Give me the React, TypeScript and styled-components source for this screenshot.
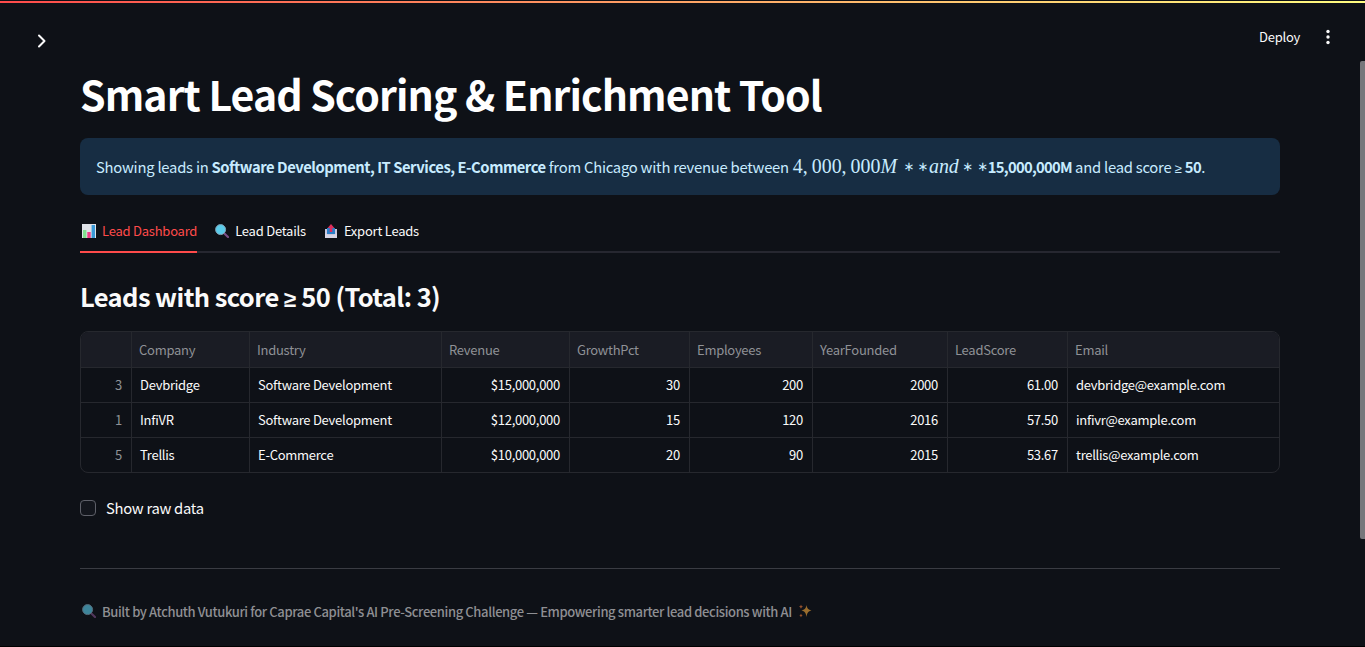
import React from "react";
import styled, { createGlobalStyle } from "styled-components";

const Global = createGlobalStyle`
  html, body { margin: 0; padding: 0; height: 100%; overflow: hidden; background: #0e1117; }
  body { font-family: "Noto Sans CJK SC", "Noto Sans", sans-serif; color: #fafafa; }
  * { box-sizing: border-box; }
`;

const Shell = styled.div`
  position: relative;
  height: 647px;
  overflow: hidden;
  background: #0e1117;
  border-bottom: 1px solid #000;
`;
const Decoration = styled.div`
  height: 2px;
  margin-top: 1px;
  background: linear-gradient(90deg, #ff4b4b, #fffd80);
`;
const Header = styled.header`
  display: flex;
  align-items: flex-start;
  justify-content: space-between;
  height: 57px;
  padding: 24px 29px 0 34px;
`;
const Chevron = styled.svg`
  margin-top: 6px;
`;
const HeaderActions = styled.div`
  display: flex;
  align-items: center;
  gap: 20px;
`;
const Deploy = styled.span`
  font-size: 13px;
  line-height: 20px;
  letter-spacing: -0.25px;
  color: #fafafa;
`;
const Main = styled.main`
  width: 1200px;
  margin-left: 80px;
`;
const Title = styled.h1`
  margin: 11px 0 0;
  height: 44px;
  font-size: 41px;
  line-height: 44px;
  font-weight: 700;
  letter-spacing: -0.9px;
  color: #fff;
  white-space: nowrap;
`;
const Alert = styled.div`
  margin-top: 23px;
  height: 57px;
  padding: 0 16px 1px;
  display: flex;
  align-items: center;
  border-radius: 8px;
  background: #172d43;
  color: #c7ebff;
  font-size: 14.8px;
  letter-spacing: -0.24px;
  white-space: pre;
  b { font-weight: 600; letter-spacing: -0.47px; }
`;
const MathRun = styled.span`
  font-family: "Liberation Serif", serif;
  font-size: 19.9px;
  letter-spacing: 0;
  display: inline-flex;
  align-items: center;
  margin-left: 4px;
  i { font-style: italic; }
`;
const MathWord = styled.i`
  margin-left: 2px;
`;
const Star = styled.span<{ $gap: number }>`
  display: inline-flex;
  justify-content: center;
  width: 8px;
  font-size: 13px;
  font-family: "DejaVu Sans", sans-serif;
  margin-left: ${(p) => p.$gap}px;
`;
const AfterMath = styled.span`
  margin-left: 1px;
`;
const Amount = styled.b`
  && { letter-spacing: -0.72px; }
`;
const Ge = styled.span`
  font-family: "Liberation Sans", sans-serif;
  font-size: 0.88em;
  letter-spacing: 0;
`;
const Tabs = styled.div`
  margin-top: 15px;
  display: flex;
  gap: 16px;
  height: 43px;
  border-bottom: 2px solid #262730;
`;
const Tab = styled.div<{ $active?: boolean }>`
  display: flex;
  align-items: center;
  gap: 6px;
  height: 43px;
  font-size: 13px;
  letter-spacing: -0.23px;
  color: ${(p) => (p.$active ? "#ff4b4b" : "#fafafa")};
  border-bottom: 2px solid ${(p) => (p.$active ? "#ff4b4b" : "transparent")};
  svg { flex: none; margin-left: 2px; }
`;
const Heading = styled.h2`
  margin: 25px 0 0;
  height: 36px;
  font-size: 25.5px;
  line-height: 36px;
  font-weight: 600;
  letter-spacing: -0.6px;
  color: #fafafa;
`;
const Table = styled.div`
  margin-top: 17px;
  width: 1200px;
  height: 142px;
  border: 1px solid #26282e;
  border-radius: 8px;
  overflow: hidden;
`;
const Row = styled.div<{ $head?: boolean }>`
  display: grid;
  grid-template-columns: 51px 118px 192px 128px 120px 123px 135px 120px 1fr;
  height: ${(p) => (p.$head ? "36px" : "35px")};
  background: ${(p) => (p.$head ? "#1a1c24" : "transparent")};
  border-bottom: 1px solid #26282e;
  &:last-child { border-bottom: 0; height: 34px; }
`;
const Cell = styled.div<{ $num?: boolean; $muted?: boolean; $head?: boolean }>`
  display: flex;
  align-items: center;
  justify-content: ${(p) => (p.$num ? "flex-end" : "flex-start")};
  padding: ${(p) => (p.$head ? "0 9px 0 7px" : "0 9px 2px 8px")};
  font-size: 13px;
  letter-spacing: -0.27px;
  color: ${(p) => (p.$muted ? "#8f9196" : "#fafafa")};
  border-right: 1px solid #26282e;
  white-space: nowrap;
  &:last-child { border-right: 0; }
`;
const CheckRow = styled.label`
  margin-top: 27px;
  display: flex;
  align-items: center;
  gap: 10px;
  height: 16px;
  font-size: 14.8px;
  letter-spacing: -0.3px;
  color: #fafafa;
`;
const CheckText = styled.span`
  margin-bottom: 2px;
`;
const Box = styled.span`
  width: 16px;
  height: 16px;
  border: 1px solid #5e6069;
  border-radius: 4px;
  background: #13161d;
`;
const Rule = styled.hr`
  margin: 52px 0 0;
  border: 0;
  height: 1px;
  background: #3a3c43;
`;
const Footer = styled.footer`
  margin-top: 32px;
  display: flex;
  align-items: center;
  gap: 6px;
  height: 20px;
  font-size: 13px;
  font-weight: 500;
  letter-spacing: -0.38px;
  color: #8e8f93;
  white-space: nowrap;
  svg { flex: none; opacity: 0.62; }
  svg:first-child { margin-left: 2px; }
`;
const Scrollbar = styled.div`
  position: absolute;
  right: 0;
  top: 61px;
  width: 5px;
  height: 478px;
  border-radius: 2px 0 0 2px;
  background: #76777b;
`;

const Chart = () => (
  <svg width="14" height="14" viewBox="0 0 14 14">
    <rect x="0" y="0" width="14" height="14" fill="#dfe2e8" />
    <rect x="1" y="6" width="3.4" height="8" fill="#7fe08e" />
    <rect x="5.3" y="8" width="3.4" height="6" fill="#ef3f87" />
    <rect x="9.6" y="1" width="3.4" height="13" fill="#3a9ad8" />
  </svg>
);
const Lens = ({ size = 14 }: { size?: number }) => (
  <svg width={size} height={size} viewBox="0 0 14 14">
    <path d="M8.6 8.8 13 13" stroke="#7a4e86" strokeWidth="2.2" strokeLinecap="round" />
    <circle cx="5.6" cy="5.6" r="5" fill="#5bcdec" stroke="#7fa0b4" strokeWidth="1" />
  </svg>
);
const Outbox = () => (
  <svg width="14" height="14" viewBox="0 0 14 14">
    <path d="M1 5h12v9H1z" fill="#c9c6dd" />
    <path d="M3 4h8v6H3z" fill="#2b7fc8" />
    <path d="M1 9l3 2h6l3-2v5H1z" fill="#d8d6e6" />
    <path d="M7 0l3.4 4H8.3v4H5.7V4H3.6z" fill="#dd2e5c" />
  </svg>
);
const Sparkle = () => (
  <svg width="14" height="14" viewBox="0 0 14 14">
    <path d="M8.5 1c.6 3.4 1.7 4.6 5 5.4-3.3.8-4.4 2-5 6.6-.6-4.6-1.7-5.8-5-6.6 3.3-.8 4.4-2 5-5.4z" fill="#f0a63c" />
    <path d="M3 .5c.3 1.3.8 1.8 2 2.2-1.2.4-1.7.9-2 2.2-.3-1.3-.8-1.8-2-2.2 1.2-.4 1.7-.9 2-2.2zM3 9.5c.3 1.2.7 1.6 1.8 2-1.1.4-1.5.8-1.8 2-.3-1.2-.7-1.6-1.8-2 1.1-.4 1.5-.8 1.8-2z" fill="#e8793c" />
  </svg>
);

const columns = ["", "Company", "Industry", "Revenue", "GrowthPct", "Employees", "YearFounded", "LeadScore", "Email"];
const rows = [
  ["3", "Devbridge", "Software Development", "$15,000,000", "30", "200", "2000", "61.00", "devbridge@example.com"],
  ["1", "InfiVR", "Software Development", "$12,000,000", "15", "120", "2016", "57.50", "infivr@example.com"],
  ["5", "Trellis", "E-Commerce", "$10,000,000", "20", "90", "2015", "53.67", "trellis@example.com"],
];
const numeric = new Set([0, 3, 4, 5, 6, 7]);

export default function App() {
  return (
    <Shell>
      <Global />
      <Decoration />
      <Header>
        <Chevron width="16" height="16" viewBox="0 0 16 16" fill="none" stroke="#fafafa" strokeWidth="2" strokeLinecap="round" strokeLinejoin="round">
          <path d="M5 2.5 10.5 8 5 13.5" />
        </Chevron>
        <HeaderActions>
          <Deploy>Deploy</Deploy>
          <svg width="16" height="16" viewBox="0 0 16 16" fill="#fafafa">
            <circle cx="8" cy="2.5" r="1.7" />
            <circle cx="8" cy="8" r="1.7" />
            <circle cx="8" cy="13.5" r="1.7" />
          </svg>
        </HeaderActions>
      </Header>
      <Main>
        <Title>Smart Lead Scoring &amp; Enrichment Tool</Title>
        <Alert>
          <span>Showing leads in <b>Software Development, IT Services, E-Commerce</b> from Chicago with revenue between</span>
          <MathRun>
            4,{"\u2009"}000,{"\u2009"}000<i>M</i>
            <Star $gap={8}>∗</Star>
            <Star $gap={6}>∗</Star>
            <MathWord>and</MathWord>
            <Star $gap={5}>∗</Star>
            <Star $gap={7}>∗</Star>
          </MathRun>
          <AfterMath><Amount>15,000,000M</Amount> and lead score <Ge>≥</Ge> <b>50</b>.</AfterMath>
        </Alert>
        <Tabs>
          <Tab $active><Chart />Lead Dashboard</Tab>
          <Tab><Lens />Lead Details</Tab>
          <Tab><Outbox />Export Leads</Tab>
        </Tabs>
        <Heading>Leads with score <Ge>≥</Ge> 50 (Total: 3)</Heading>
        <Table>
          <Row $head>
            {columns.map((c, i) => (
              <Cell key={i} $muted $head>{c}</Cell>
            ))}
          </Row>
          {rows.map((r) => (
            <Row key={r[0]}>
              {r.map((v, i) => (
                <Cell key={i} $num={numeric.has(i)} $muted={i === 0}>{v}</Cell>
              ))}
            </Row>
          ))}
        </Table>
        <CheckRow><Box /><CheckText>Show raw data</CheckText></CheckRow>
        <Rule />
        <Footer>
          <Lens />
          Built by Atchuth Vutukuri for Caprae Capital's AI Pre-Screening Challenge — Empowering smarter lead decisions with AI
          <Sparkle />
        </Footer>
      </Main>
      <Scrollbar />
    </Shell>
  );
}
